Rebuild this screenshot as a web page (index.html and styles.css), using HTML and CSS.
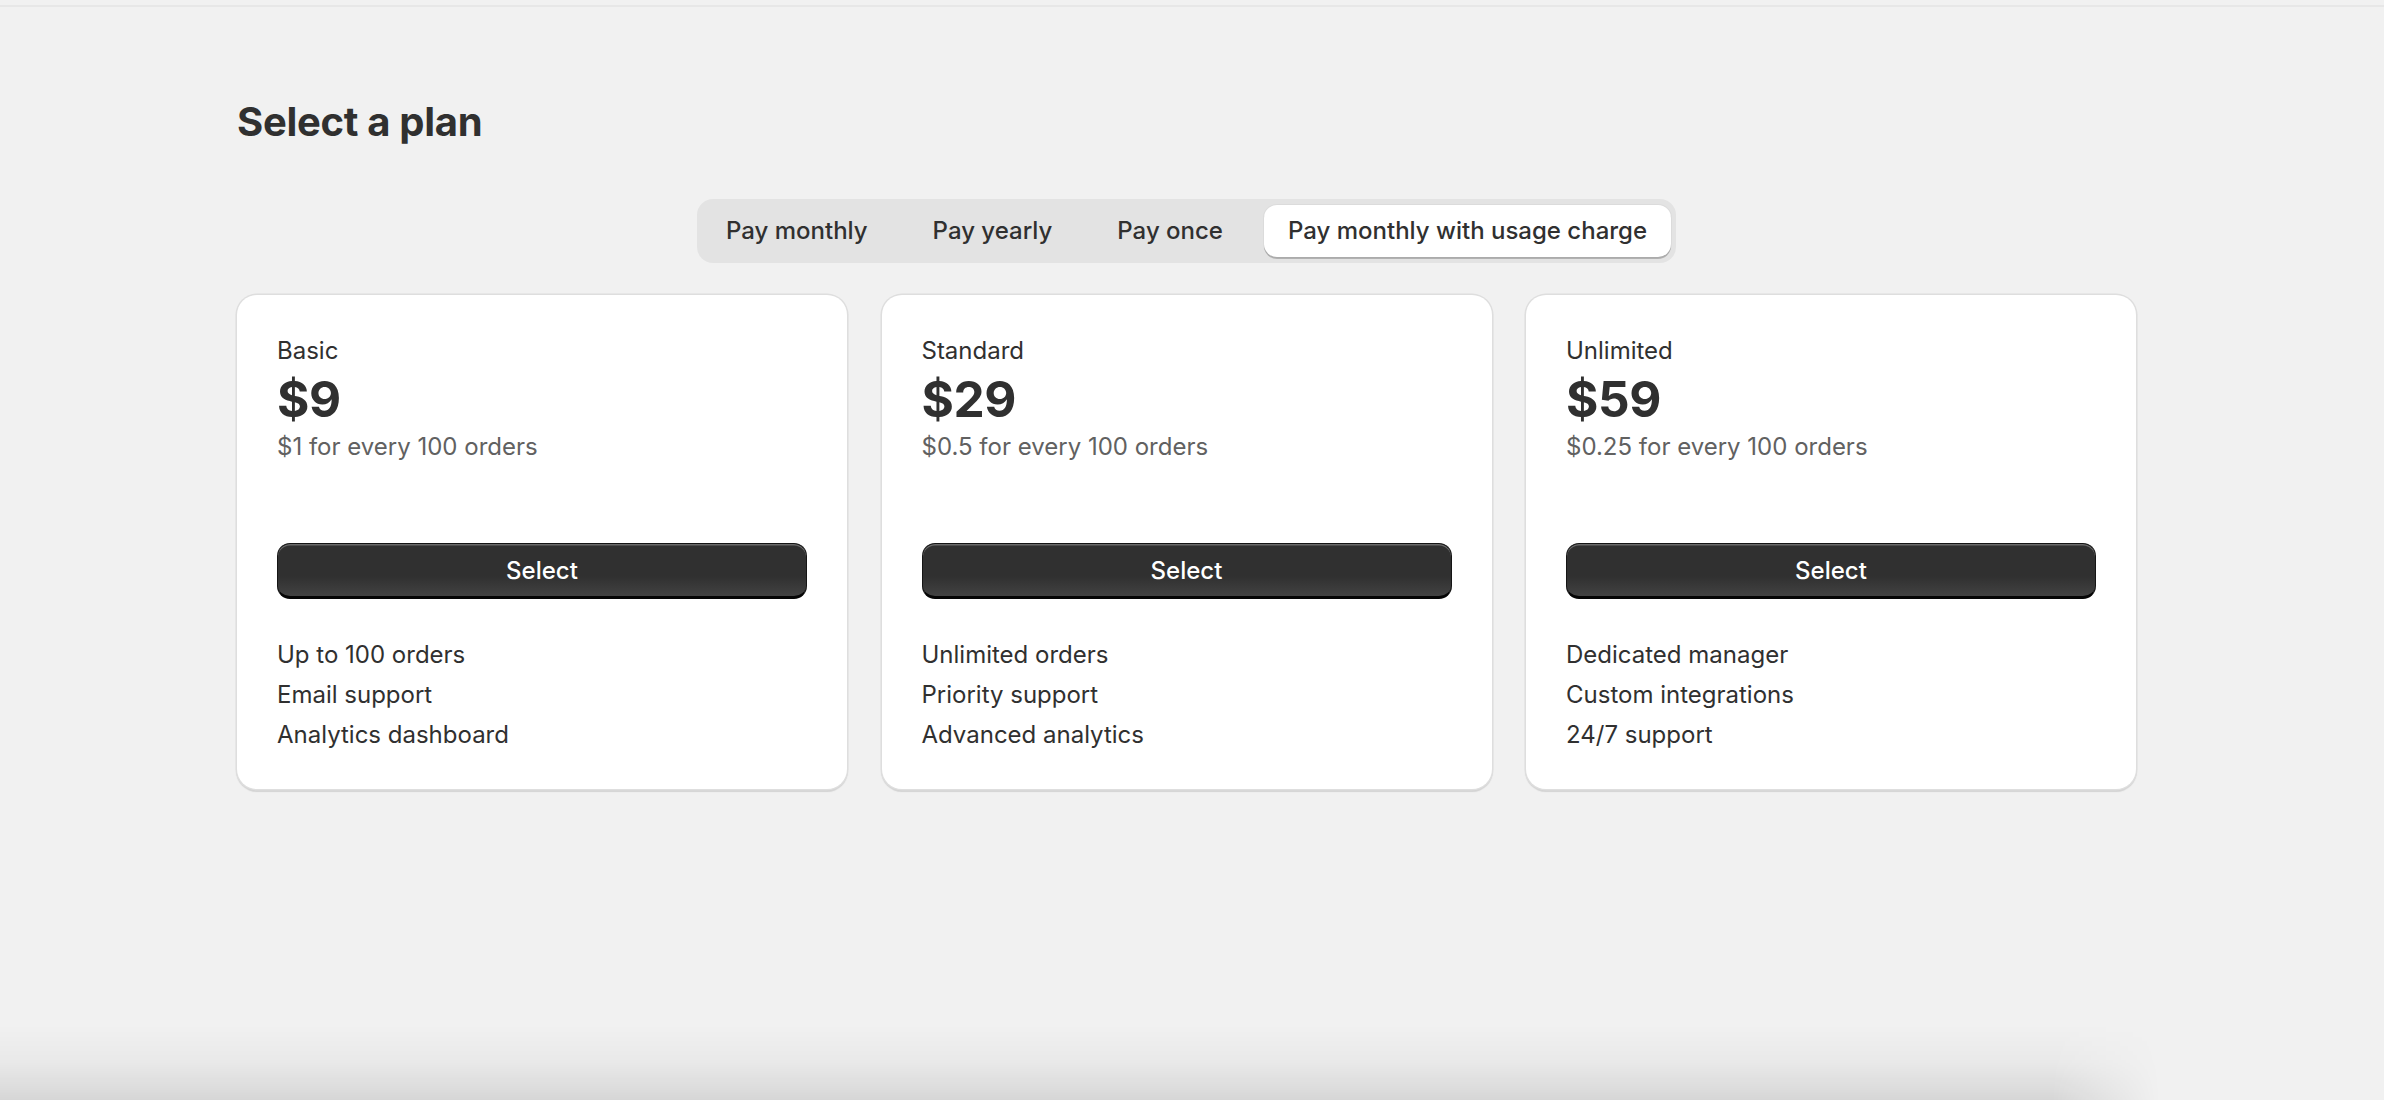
FILE: index.html
```html
<!DOCTYPE html>
<html lang="en">
<head>
<meta charset="utf-8">
<title>Select a plan</title>
<link rel="stylesheet" href="styles.css">
</head>
<body>
<div class="topline"></div>
<main class="page">
  <h1 class="title">Select a plan</h1>
  <div class="tabs-row">
    <div class="tabs">
      <button class="tab">Pay monthly</button>
      <button class="tab">Pay yearly</button>
      <button class="tab">Pay once</button>
      <button class="tab active">Pay monthly with usage charge</button>
    </div>
  </div>
  <div class="cards">
    <section class="card">
      <div class="head">
        <div class="name">Basic</div>
        <div class="price">$9</div>
        <div class="usage">$1 for every 100 orders</div>
      </div>
      <button class="select">Select</button>
      <ul class="features">
        <li>Up to 100 orders</li>
        <li>Email support</li>
        <li>Analytics dashboard</li>
      </ul>
    </section>
    <section class="card">
      <div class="head">
        <div class="name">Standard</div>
        <div class="price">$29</div>
        <div class="usage">$0.5 for every 100 orders</div>
      </div>
      <button class="select">Select</button>
      <ul class="features">
        <li>Unlimited orders</li>
        <li>Priority support</li>
        <li>Advanced analytics</li>
      </ul>
    </section>
    <section class="card">
      <div class="head">
        <div class="name">Unlimited</div>
        <div class="price">$59</div>
        <div class="usage">$0.25 for every 100 orders</div>
      </div>
      <button class="select">Select</button>
      <ul class="features">
        <li>Dedicated manager</li>
        <li>Custom integrations</li>
        <li>24/7 support</li>
      </ul>
    </section>
  </div>
</main>
<div class="bottom-shade"></div>
</body>
</html>
```

FILE: styles.css
```css
* { box-sizing: border-box; }
html, body {
  margin: 0;
  padding: 0;
  height: 100%;
  overflow: hidden;
}
body {
  background: #f1f1f1;
  color: #303030;
  font-family: "Inter", "Noto Sans", sans-serif;
  position: relative;
}
.topline {
  height: 7px;
  border-bottom: 2px solid #e7e7e7;
}
.page {
  width: 1899px;
  margin-left: 237px;
  padding-top: 91px;
}
.title {
  margin: 0;
  font-size: 40px;
  line-height: 48px;
  font-weight: 700;
  letter-spacing: -0.3px;
  color: #303030;
}
.tabs-row {
  display: flex;
  justify-content: center;
  margin-top: 53px;
}
.tabs {
  display: flex;
  gap: 17px;
  padding: 6px 5px;
  background: #e3e3e3;
  border-radius: 16px;
}
.tab {
  font-family: inherit;
  font-size: 24px;
  line-height: 32px;
  font-weight: 500;
  color: #303030;
  background: transparent;
  border: 0;
  padding: 10px 24px;
  border-radius: 13px;
  cursor: pointer;
}
.tab.active {
  background: #ffffff;
  box-shadow: 0 2px 0 rgba(0, 0, 0, 0.22), 0 0 0 1px rgba(0, 0, 0, 0.03);
}
.cards {
  display: grid;
  grid-template-columns: repeat(3, 610px);
  column-gap: 34.5px;
  margin-top: 32px;
}
.card {
  background: #ffffff;
  border-radius: 20px;
  padding: 40px 40px 38px;
  box-shadow: 0 0 0 1.5px #dedede, 0 2px 1px 1px #d3d3d3;
  display: flex;
  flex-direction: column;
}
.head {
  display: flex;
  flex-direction: column;
}
.name {
  font-size: 24px;
  line-height: 32px;
}
.price {
  font-size: 49.5px;
  line-height: 64px;
  font-weight: 700;
  letter-spacing: -0.4px;
}
.usage {
  font-size: 24px;
  line-height: 32px;
  color: #616161;
}
.select {
  margin-top: 80px;
  height: 56px;
  width: 100%;
  font-family: inherit;
  font-size: 24px;
  font-weight: 500;
  color: #ffffff;
  background: linear-gradient(to bottom, #303030 0%, #303030 62%, #424242 100%);
  border: 1.5px solid #151515;
  border-bottom: 3px solid #050505;
  border-radius: 13px;
  box-shadow: inset 0 1.5px 0 rgba(255, 255, 255, 0.28);
  cursor: pointer;
}
.features {
  list-style: none;
  margin: 40px 0 0;
  padding: 0;
  display: flex;
  flex-direction: column;
  gap: 8px;
}
.features li {
  font-size: 24px;
  line-height: 32px;
}
.bottom-shade {
  position: absolute;
  left: 0;
  bottom: 0;
  width: 2160px;
  height: 75px;
  background: linear-gradient(to bottom, rgba(0, 0, 0, 0) 0%, rgba(0, 0, 0, 0.03) 50%, rgba(0, 0, 0, 0.11) 100%);
  -webkit-mask-image: linear-gradient(to right, #000 0%, #000 95%, transparent 100%);
  mask-image: linear-gradient(to right, #000 0%, #000 95%, transparent 100%);
  pointer-events: none;
}
```
